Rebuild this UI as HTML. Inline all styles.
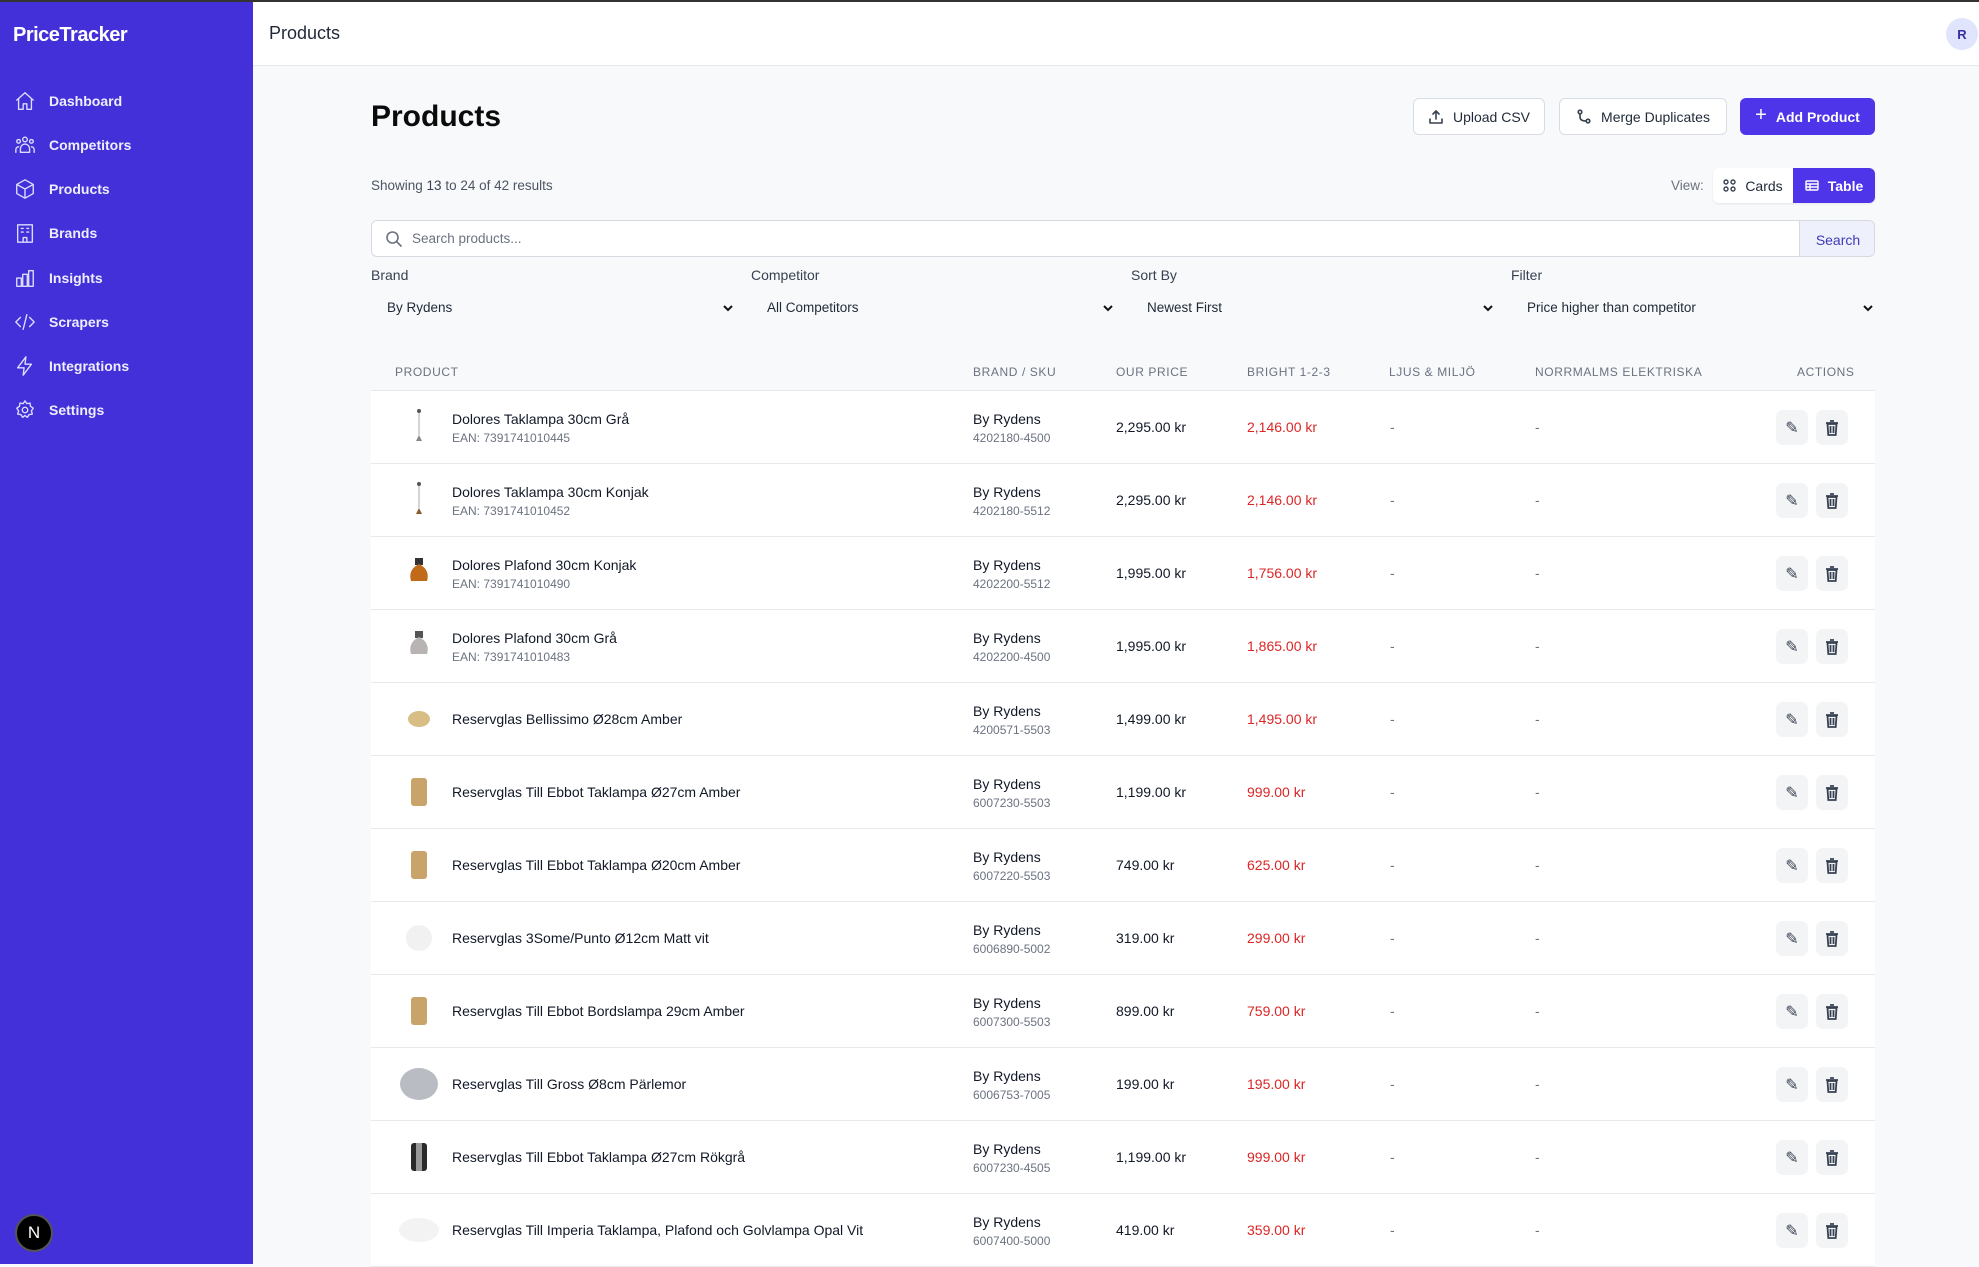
<!DOCTYPE html>
<html><head><meta charset="utf-8">
<style>
*{box-sizing:border-box;margin:0;padding:0}
body{width:1979px;height:1264px;overflow:hidden;background:#f8f9fb;font-family:"Liberation Sans",sans-serif;color:#111827;position:relative}
.abs{position:absolute}
#top{position:absolute;left:0;top:0;width:1979px;height:2px;background:#333}
#side{position:absolute;left:0;top:2px;width:253px;height:1262px;background:#4330d8;color:#fff}
#side .logo{position:absolute;left:13px;top:22px;font-size:20px;font-weight:bold;letter-spacing:-0.5px}
.nav{position:absolute;left:14px;display:flex;align-items:center;font-size:14px;font-weight:bold;color:#eef}
.nav svg{width:22px;height:22px;margin-right:13px;fill:none;stroke:#dcdcff;stroke-width:1.5;stroke-linecap:round;stroke-linejoin:round}
#hdr{position:absolute;left:253px;top:2px;width:1726px;height:64px;background:#fff;border-bottom:1px solid #e5e7eb}
.btn{position:absolute;height:37px;border:1px solid #d9dce2;border-radius:6px;background:#fff;display:flex;align-items:center;justify-content:center;font-size:14px;color:#1f2937}
.btn svg{width:16px;height:16px;margin-right:9px;fill:none;stroke:#374151;stroke-width:1.6;stroke-linecap:round;stroke-linejoin:round}
.lbl{position:absolute;font-size:14px;color:#374151;top:267px}
.sel{position:absolute;font-size:13.5px;color:#1f2937;top:300px}
.chev{position:absolute;top:302px;width:12px;height:12px}
.th{position:absolute;top:365px;font-size:12px;color:#6b7280;letter-spacing:0.6px}
.row{position:absolute;left:371px;width:1504px;height:73px;background:#fff;border-bottom:1px solid #e8eaee}
.row .c{position:absolute;font-size:14px}
.nm{left:81px;top:20px;color:#111827}
.nm.one{top:28px}
.ean{left:81px;top:40px;font-size:12px!important;color:#6b7280}
.br{left:602px;top:20px}
.sku{left:602px;top:40px;font-size:12px!important;color:#6b7280}
.op{left:745px;top:28px}
.bp{left:876px;top:28px;color:#dc2626}
.d1{left:1019px;top:28px;color:#6b7280}
.d2{left:1164px;top:28px;color:#6b7280}
.ab{position:absolute;top:19px;width:32px;height:35px;border-radius:7px;background:#f3f4f6;display:flex;align-items:center;justify-content:center}
.img{position:absolute;left:24px;top:12px;width:48px;height:48px}
</style></head><body>
<div id="top"></div>
<div id="side">
 <div class="logo">PriceTracker</div>
 <div class="nav" style="top:88px"><svg viewBox="0 0 24 24"><path d="M3 11l9-8 9 8M5 9.5V21h5v-6h4v6h5V9.5"/></svg>Dashboard</div>
 <div class="nav" style="top:132px"><svg viewBox="0 0 24 24"><circle cx="12" cy="6" r="2.5"/><circle cx="5" cy="8" r="2"/><circle cx="19" cy="8" r="2"/><path d="M7 20v-4a5 5 0 0110 0v4zM2 20v-3a3 3 0 013-3M22 20v-3a3 3 0 00-3-3"/></svg>Competitors</div>
 <div class="nav" style="top:176px"><svg viewBox="0 0 24 24"><path d="M12 2l9 5v10l-9 5-9-5V7zM3 7l9 5 9-5M12 12v10"/></svg>Products</div>
 <div class="nav" style="top:220px"><svg viewBox="0 0 24 24"><path d="M4 22V3h16v19zM8 7h2M14 7h2M8 11h2M14 11h2M10 22v-5h4v5"/></svg>Brands</div>
 <div class="nav" style="top:265px"><svg viewBox="0 0 24 24"><path d="M3 21V12h5v9zM9.5 21V8h5v13zM16 21V4h5v17z"/></svg>Insights</div>
 <div class="nav" style="top:309px"><svg viewBox="0 0 24 24"><path d="M7 7l-5 5 5 5M17 7l5 5-5 5M14 4l-4 16"/></svg>Scrapers</div>
 <div class="nav" style="top:353px"><svg viewBox="0 0 24 24"><path d="M13 2L4 14h7l-1 8 9-12h-7z"/></svg>Integrations</div>
 <div class="nav" style="top:397px"><svg viewBox="0 0 24 24"><circle cx="12" cy="12" r="3"/><path d="M12 2l2 3 3.5-.5.5 3.5 3 2-2 3 1 3.5-3.5.5-2 3-2.5-2-2.5 2-2-3-3.5-.5 1-3.5-2-3 3-2 .5-3.5L10 5z"/></svg>Settings</div>
 <div class="abs" style="left:15px;top:1212px;width:38px;height:38px;border-radius:50%;background:#000;border:2px solid #555;color:#fff;font-size:17px;display:flex;align-items:center;justify-content:center">N</div>
</div>
<div id="hdr"><div class="abs" style="left:16px;top:21px;font-size:18px;color:#1f2937">Products</div>
 <div class="abs" style="left:1693px;top:16px;width:32px;height:32px;border-radius:50%;background:#e0e4fc;color:#3730a3;font-size:13px;font-weight:bold;display:flex;align-items:center;justify-content:center">R</div></div>

<div class="abs" style="left:371px;top:100px;font-size:30px;font-weight:bold;color:#0b0b0b">Products</div>
<div class="btn" style="left:1413px;top:98px;width:132px"><svg viewBox="0 0 16 16"><path d="M8 10V2M5 5l3-3 3 3M2 10v4h12v-4"/></svg>Upload CSV</div>
<div class="btn" style="left:1559px;top:98px;width:168px"><svg viewBox="0 0 16 16"><circle cx="4" cy="3" r="1.8"/><circle cx="12" cy="12" r="1.8"/><path d="M4 5v3q0 4 6 4"/></svg>Merge Duplicates</div>
<div class="btn" style="left:1740px;top:98px;width:135px;background:#4f35ea;border-color:#4f35ea;color:#fff;font-weight:bold"><span style="font-size:20px;font-weight:normal;margin-right:9px;margin-top:-3px">+</span>Add Product</div>

<div class="abs" style="left:371px;top:178px;font-size:13.5px;color:#4b5563">Showing <b style="font-weight:normal;color:#374151">13</b> to <span>24</span> of <span>42</span> results</div>
<div class="abs" style="left:1671px;top:178px;font-size:13.5px;color:#6b7280">View:</div>
<div class="abs" style="left:1713px;top:168px;width:162px;height:35px;border-radius:6px;background:#fff;box-shadow:0 1px 2px rgba(0,0,0,.08);overflow:hidden;display:flex;font-size:14px">
 <div style="width:80px;display:flex;align-items:center;justify-content:center;color:#1f2937"><svg width="13" height="13" viewBox="0 0 13 13" style="margin-right:9px" fill="none" stroke="#374151" stroke-width="1.4"><circle cx="3" cy="3" r="2"/><circle cx="10" cy="3" r="2"/><circle cx="3" cy="10" r="2"/><circle cx="10" cy="10" r="2"/></svg>Cards</div>
 <div style="width:82px;background:#4f35ea;color:#fff;font-weight:bold;display:flex;align-items:center;justify-content:center"><svg width="14" height="11" viewBox="0 0 14 11" style="margin-right:9px" fill="none" stroke="#fff" stroke-width="1.4"><rect x="1" y="1" width="12" height="9" rx="1"/><path d="M1 4h12M1 7h12M5 4v6"/></svg>Table</div>
</div>
<div class="abs" style="left:371px;top:220px;width:1504px;height:37px;border:1px solid #d6d9df;border-radius:6px;background:#fff;overflow:hidden">
 <svg class="abs" style="left:13px;top:9px" width="18" height="18" viewBox="0 0 18 18" fill="none" stroke="#6b7280" stroke-width="1.6"><circle cx="7.5" cy="7.5" r="5.5"/><path d="M11.5 11.5l5 5"/></svg>
 <div class="abs" style="left:40px;top:10px;font-size:13.5px;color:#6b7280">Search products...</div>
 <div class="abs" style="left:1427px;top:0;width:77px;height:37px;background:#eef0fb;border-left:1px solid #d6d9df;color:#3f3ab8;font-size:14px;display:flex;align-items:center;justify-content:center">Search</div>
</div>
<div class="lbl" style="left:371px">Brand</div><div class="lbl" style="left:751px">Competitor</div><div class="lbl" style="left:1131px">Sort By</div><div class="lbl" style="left:1511px">Filter</div>
<div class="sel" style="left:387px">By Rydens</div><div class="sel" style="left:767px">All Competitors</div><div class="sel" style="left:1147px">Newest First</div><div class="sel" style="left:1527px">Price higher than competitor</div>
<svg class="chev" style="left:722px" viewBox="0 0 12 12"><path d="M2 4l4 4 4-4" fill="none" stroke="#111" stroke-width="2"/></svg>
<svg class="chev" style="left:1102px" viewBox="0 0 12 12"><path d="M2 4l4 4 4-4" fill="none" stroke="#111" stroke-width="2"/></svg>
<svg class="chev" style="left:1482px" viewBox="0 0 12 12"><path d="M2 4l4 4 4-4" fill="none" stroke="#111" stroke-width="2"/></svg>
<svg class="chev" style="left:1862px" viewBox="0 0 12 12"><path d="M2 4l4 4 4-4" fill="none" stroke="#111" stroke-width="2"/></svg>

<div class="th" style="left:395px">PRODUCT</div><div class="th" style="left:973px">BRAND / SKU</div><div class="th" style="left:1116px">OUR PRICE</div><div class="th" style="left:1247px">BRIGHT 1-2-3</div><div class="th" style="left:1389px">LJUS &amp; MILJÖ</div><div class="th" style="left:1535px">NORRMALMS ELEKTRISKA</div><div class="th" style="left:1797px">ACTIONS</div>
<div class="abs" style="left:371px;top:390px;width:1504px;height:1px;background:#e5e7eb"></div>

<!-- rows -->
<div class="row" style="top:391px"><svg class="img" viewBox="0 0 48 48"><circle cx="24" cy="8" r="2" fill="#555"/><path d="M24 10v22" stroke="#aaa" stroke-width="1"/><path d="M21 38l3-6 3 6z" fill="#888"/></svg><div class="c nm">Dolores Taklampa 30cm Grå</div><div class="c ean">EAN: 7391741010445</div><div class="c br">By Rydens</div><div class="c sku">4202180-4500</div><div class="c op">2,295.00 kr</div><div class="c bp">2,146.00 kr</div><div class="c d1">-</div><div class="c d2">-</div><div class="ab" style="left:1405px">✎</div><div class="ab" style="left:1445px"><svg width="14" height="16" viewBox="0 0 14 16"><path d="M1 3h12M5 1h4M2.5 4h9l-.8 11H3.3zM5.5 6v7M8.5 6v7" stroke="#374151" stroke-width="1.8" fill="none"/></svg></div></div>
<div class="row" style="top:464px"><svg class="img" viewBox="0 0 48 48"><circle cx="24" cy="8" r="2" fill="#555"/><path d="M24 10v22" stroke="#aaa" stroke-width="1"/><path d="M21 38l3-6 3 6z" fill="#8a5a30"/></svg><div class="c nm">Dolores Taklampa 30cm Konjak</div><div class="c ean">EAN: 7391741010452</div><div class="c br">By Rydens</div><div class="c sku">4202180-5512</div><div class="c op">2,295.00 kr</div><div class="c bp">2,146.00 kr</div><div class="c d1">-</div><div class="c d2">-</div><div class="ab" style="left:1405px">✎</div><div class="ab" style="left:1445px"><svg width="14" height="16" viewBox="0 0 14 16"><path d="M1 3h12M5 1h4M2.5 4h9l-.8 11H3.3zM5.5 6v7M8.5 6v7" stroke="#374151" stroke-width="1.8" fill="none"/></svg></div></div>
<div class="row" style="top:537px"><svg class="img" viewBox="0 0 48 48"><rect x="20" y="9" width="8" height="7" fill="#333"/><path d="M24 15c-8 4-10 10-8 17h16c2-7 0-13-8-17z" fill="#c06a1a"/></svg><div class="c nm">Dolores Plafond 30cm Konjak</div><div class="c ean">EAN: 7391741010490</div><div class="c br">By Rydens</div><div class="c sku">4202200-5512</div><div class="c op">1,995.00 kr</div><div class="c bp">1,756.00 kr</div><div class="c d1">-</div><div class="c d2">-</div><div class="ab" style="left:1405px">✎</div><div class="ab" style="left:1445px"><svg width="14" height="16" viewBox="0 0 14 16"><path d="M1 3h12M5 1h4M2.5 4h9l-.8 11H3.3zM5.5 6v7M8.5 6v7" stroke="#374151" stroke-width="1.8" fill="none"/></svg></div></div>
<div class="row" style="top:610px"><svg class="img" viewBox="0 0 48 48"><rect x="20" y="9" width="8" height="7" fill="#555"/><path d="M24 15c-8 4-10 10-8 17h16c2-7 0-13-8-17z" fill="#b8b4b4"/></svg><div class="c nm">Dolores Plafond 30cm Grå</div><div class="c ean">EAN: 7391741010483</div><div class="c br">By Rydens</div><div class="c sku">4202200-4500</div><div class="c op">1,995.00 kr</div><div class="c bp">1,865.00 kr</div><div class="c d1">-</div><div class="c d2">-</div><div class="ab" style="left:1405px">✎</div><div class="ab" style="left:1445px"><svg width="14" height="16" viewBox="0 0 14 16"><path d="M1 3h12M5 1h4M2.5 4h9l-.8 11H3.3zM5.5 6v7M8.5 6v7" stroke="#374151" stroke-width="1.8" fill="none"/></svg></div></div>
<div class="row" style="top:683px"><svg class="img" viewBox="0 0 48 48"><ellipse cx="24" cy="24" rx="11" ry="8" fill="#d8bd85"/></svg><div class="c nm one">Reservglas Bellissimo Ø28cm Amber</div><div class="c br">By Rydens</div><div class="c sku">4200571-5503</div><div class="c op">1,499.00 kr</div><div class="c bp">1,495.00 kr</div><div class="c d1">-</div><div class="c d2">-</div><div class="ab" style="left:1405px">✎</div><div class="ab" style="left:1445px"><svg width="14" height="16" viewBox="0 0 14 16"><path d="M1 3h12M5 1h4M2.5 4h9l-.8 11H3.3zM5.5 6v7M8.5 6v7" stroke="#374151" stroke-width="1.8" fill="none"/></svg></div></div>
<div class="row" style="top:756px"><svg class="img" viewBox="0 0 48 48"><rect x="16" y="10" width="16" height="28" rx="3" fill="#c9a46a"/></svg><div class="c nm one">Reservglas Till Ebbot Taklampa Ø27cm Amber</div><div class="c br">By Rydens</div><div class="c sku">6007230-5503</div><div class="c op">1,199.00 kr</div><div class="c bp">999.00 kr</div><div class="c d1">-</div><div class="c d2">-</div><div class="ab" style="left:1405px">✎</div><div class="ab" style="left:1445px"><svg width="14" height="16" viewBox="0 0 14 16"><path d="M1 3h12M5 1h4M2.5 4h9l-.8 11H3.3zM5.5 6v7M8.5 6v7" stroke="#374151" stroke-width="1.8" fill="none"/></svg></div></div>
<div class="row" style="top:829px"><svg class="img" viewBox="0 0 48 48"><rect x="16" y="10" width="16" height="28" rx="3" fill="#c9a46a"/></svg><div class="c nm one">Reservglas Till Ebbot Taklampa Ø20cm Amber</div><div class="c br">By Rydens</div><div class="c sku">6007220-5503</div><div class="c op">749.00 kr</div><div class="c bp">625.00 kr</div><div class="c d1">-</div><div class="c d2">-</div><div class="ab" style="left:1405px">✎</div><div class="ab" style="left:1445px"><svg width="14" height="16" viewBox="0 0 14 16"><path d="M1 3h12M5 1h4M2.5 4h9l-.8 11H3.3zM5.5 6v7M8.5 6v7" stroke="#374151" stroke-width="1.8" fill="none"/></svg></div></div>
<div class="row" style="top:902px"><svg class="img" viewBox="0 0 48 48"><circle cx="24" cy="24" r="13" fill="#f1f1f1"/></svg><div class="c nm one">Reservglas 3Some/Punto Ø12cm Matt vit</div><div class="c br">By Rydens</div><div class="c sku">6006890-5002</div><div class="c op">319.00 kr</div><div class="c bp">299.00 kr</div><div class="c d1">-</div><div class="c d2">-</div><div class="ab" style="left:1405px">✎</div><div class="ab" style="left:1445px"><svg width="14" height="16" viewBox="0 0 14 16"><path d="M1 3h12M5 1h4M2.5 4h9l-.8 11H3.3zM5.5 6v7M8.5 6v7" stroke="#374151" stroke-width="1.8" fill="none"/></svg></div></div>
<div class="row" style="top:975px"><svg class="img" viewBox="0 0 48 48"><rect x="16" y="10" width="16" height="28" rx="3" fill="#c9a46a"/></svg><div class="c nm one">Reservglas Till Ebbot Bordslampa 29cm Amber</div><div class="c br">By Rydens</div><div class="c sku">6007300-5503</div><div class="c op">899.00 kr</div><div class="c bp">759.00 kr</div><div class="c d1">-</div><div class="c d2">-</div><div class="ab" style="left:1405px">✎</div><div class="ab" style="left:1445px"><svg width="14" height="16" viewBox="0 0 14 16"><path d="M1 3h12M5 1h4M2.5 4h9l-.8 11H3.3zM5.5 6v7M8.5 6v7" stroke="#374151" stroke-width="1.8" fill="none"/></svg></div></div>
<div class="row" style="top:1048px"><svg class="img" viewBox="0 0 48 48"><ellipse cx="24" cy="24" rx="19" ry="16" fill="#b9bdc3"/></svg><div class="c nm one">Reservglas Till Gross Ø8cm Pärlemor</div><div class="c br">By Rydens</div><div class="c sku">6006753-7005</div><div class="c op">199.00 kr</div><div class="c bp">195.00 kr</div><div class="c d1">-</div><div class="c d2">-</div><div class="ab" style="left:1405px">✎</div><div class="ab" style="left:1445px"><svg width="14" height="16" viewBox="0 0 14 16"><path d="M1 3h12M5 1h4M2.5 4h9l-.8 11H3.3zM5.5 6v7M8.5 6v7" stroke="#374151" stroke-width="1.8" fill="none"/></svg></div></div>
<div class="row" style="top:1121px"><svg class="img" viewBox="0 0 48 48"><rect x="16" y="10" width="16" height="28" rx="3" fill="#2a2a2a"/><rect x="21" y="10" width="6" height="28" fill="#999"/></svg><div class="c nm one">Reservglas Till Ebbot Taklampa Ø27cm Rökgrå</div><div class="c br">By Rydens</div><div class="c sku">6007230-4505</div><div class="c op">1,199.00 kr</div><div class="c bp">999.00 kr</div><div class="c d1">-</div><div class="c d2">-</div><div class="ab" style="left:1405px">✎</div><div class="ab" style="left:1445px"><svg width="14" height="16" viewBox="0 0 14 16"><path d="M1 3h12M5 1h4M2.5 4h9l-.8 11H3.3zM5.5 6v7M8.5 6v7" stroke="#374151" stroke-width="1.8" fill="none"/></svg></div></div>
<div class="row" style="top:1194px"><svg class="img" viewBox="0 0 48 48"><ellipse cx="24" cy="24" rx="20" ry="12" fill="#f3f3f3"/></svg><div class="c nm one">Reservglas Till Imperia Taklampa, Plafond och Golvlampa Opal Vit</div><div class="c br">By Rydens</div><div class="c sku">6007400-5000</div><div class="c op">419.00 kr</div><div class="c bp">359.00 kr</div><div class="c d1">-</div><div class="c d2">-</div><div class="ab" style="left:1405px">✎</div><div class="ab" style="left:1445px"><svg width="14" height="16" viewBox="0 0 14 16"><path d="M1 3h12M5 1h4M2.5 4h9l-.8 11H3.3zM5.5 6v7M8.5 6v7" stroke="#374151" stroke-width="1.8" fill="none"/></svg></div></div>
<style>.ab{font-size:16px;color:#374151}</style>
</body></html>
